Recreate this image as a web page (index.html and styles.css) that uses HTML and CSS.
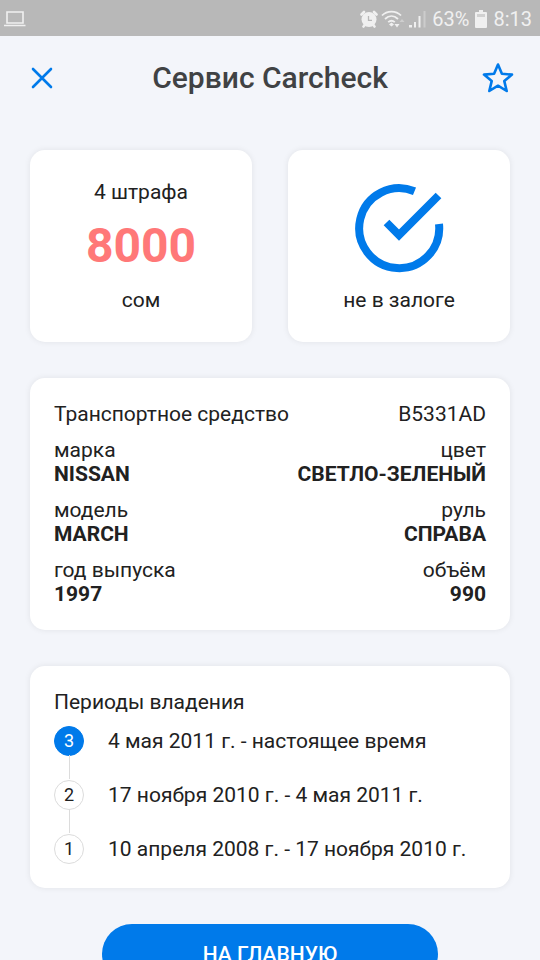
FILE: index.html
```html
<!DOCTYPE html>
<html lang="ru">
<head>
<meta charset="utf-8">
<meta name="viewport" content="width=device-width, initial-scale=1">
<title>Сервис Carcheck</title>
<link rel="stylesheet" href="styles.css">
</head>
<body>
<div class="status">
  <svg class="status-laptop" width="22" height="16" viewBox="0 0 22 16" aria-hidden="true"><path d="M3 1h16v11H3zM0 14.500h21.500" fill="none" stroke="currentColor" stroke-width="1.600"/></svg>
  <div class="status-right">
    <svg width="18" height="18" viewBox="0 0 18 18" aria-hidden="true"><path d="M1.500 4.500 4 2M16.500 4.500 14 2M3.500 16.500l2-2.500M14.500 16.500l-2-2.500" stroke="currentColor" stroke-width="2.600" stroke-linecap="round"/><circle cx="9" cy="9.500" r="7.500" fill="currentColor"/><path d="M8.500 6v4.300H12" fill="none" stroke="#b8b8b8" stroke-width="1.300"/></svg>
    <svg width="24" height="18" viewBox="0 0 24 18" aria-hidden="true"><g fill="none" stroke="currentColor" stroke-width="1.800"><path d="M1 5.500C6 .2 15 .2 20 5.500M4 9C8 5.200 13 5.200 17 9M7.200 12.200c2-1.800 4.600-1.800 6.600 0"/></g><path d="M8 14.500l2.500-2 2.500 2-2.500 2zM13.500 14h5L16 17.500z" fill="currentColor"/><path d="M21 9l2.500 3h-5z" fill="currentColor" opacity=".4"/></svg>
    <svg width="19" height="18" viewBox="0 0 19 18" aria-hidden="true"><g fill="currentColor"><path d="M1 15h3v2.500H1zM6 12h2v5.500H6zM10.500 6h2v11.500h-2z"/><path d="M15.500 1h2v16.500h-2z" opacity=".35"/></g></svg>
    <span class="status-charge">63%</span>
    <svg class="status-battery" width="12" height="18" viewBox="0 0 12 18" aria-hidden="true"><path d="M4 0h4v2h3q1 0 1 1v14q0 1-1 1H1q-1 0-1-1V3q0-1 1-1h3z" fill="currentColor"/><path d="M2 4h8v3H2z" fill="#b8b8b8" opacity=".55"/></svg>
    <time>8:13</time>
  </div>
</div>
<header class="header">
  <button class="icon-button" type="button" aria-label="Закрыть"><svg width="24" height="24" viewBox="0 0 24 24"><path d="M3 3l18 18M21 3 3 21" fill="none" stroke="currentColor" stroke-width="2.600" stroke-linecap="round"/></svg></button>
  <h1>Сервис Carcheck</h1>
  <button class="icon-button" type="button" aria-label="В избранное"><svg width="32" height="32" viewBox="0 0 32 32"><path d="M16 2.500l3.900 9.300 10.100.8-7.700 6.500 2.400 9.900L16 23.700 7.300 29l2.400-9.900L2 12.600l10.100-.8z" fill="none" stroke="currentColor" stroke-width="2.600" stroke-linejoin="round"/></svg></button>
</header>
<main class="content">
  <div class="tiles">
    <section class="card tile">
      <p>4 штрафа</p>
      <strong class="amount">8000</strong>
      <p>сом</p>
    </section>
    <section class="card tile">
      <svg class="check" width="90" height="90" viewBox="0 0 90 90" aria-hidden="true"><g fill="none" stroke="currentColor" stroke-width="8"><path d="M60.500 8.200A40 40 0 1 0 85 41"/><path d="M32.500 39.500 45 52 84.500 12.500"/></g></svg>
      <p>не в залоге</p>
    </section>
  </div>
  <section class="card">
    <div class="card-head"><h2>Транспортное средство</h2><span>B5331AD</span></div>
    <dl class="specs">
      <div><dt>марка</dt><dd>NISSAN</dd></div>
      <div><dt>цвет</dt><dd>СВЕТЛО-ЗЕЛЕНЫЙ</dd></div>
      <div><dt>модель</dt><dd>MARCH</dd></div>
      <div><dt>руль</dt><dd>СПРАВА</dd></div>
      <div><dt>год выпуска</dt><dd>1997</dd></div>
      <div><dt>объём</dt><dd>990</dd></div>
    </dl>
  </section>
  <section class="card">
    <div class="card-head"><h2>Периоды владения</h2></div>
    <ol class="periods" reversed>
      <li><span class="step step-current">3</span>4 мая 2011 г. - настоящее время</li>
      <li><span class="step">2</span>17 ноября 2010 г. - 4 мая 2011 г.</li>
      <li><span class="step">1</span>10 апреля 2008 г. - 17 ноября 2010 г.</li>
    </ol>
  </section>
  <button class="home" type="button">НА ГЛАВНУЮ</button>
</main>
</body>
</html>
```
FILE: styles.css
```css
* { box-sizing: border-box; }
body {
  margin: 0;
  height: 100vh;
  display: flex;
  flex-direction: column;
  overflow: hidden;
  background: #f3f5fa;
  color: #212121;
  font: 400 21px/24px Roboto, sans-serif;
}
h1, h2, p, dl, dd, ol { margin: 0; padding: 0; }
button { border: 0; font-family: inherit; cursor: pointer; }
svg { display: block; flex: none; }

.status {
  flex: none;
  display: flex;
  justify-content: space-between;
  align-items: center;
  height: 36px;
  padding: 2px 8px 0 4px;
  background: #b8b8b8;
  color: #f0f0f0;
  font-size: 20px;
}
.status-right { display: flex; align-items: center; gap: 3px; }
.status-charge { margin-left: 2px; }
.status-battery { margin: 0 3px; }

.header {
  flex: none;
  display: flex;
  align-items: center;
  justify-content: space-between;
  height: 84px;
  padding: 0 20px;
}
.header h1 { color: #404244; font-size: 30px; line-height: 36px; font-weight: 500; }
.icon-button {
  display: grid;
  place-items: center;
  width: 44px;
  height: 44px;
  padding: 0;
  background: none;
  color: #007aea;
}

.content {
  flex: 1;
  min-height: 0;
  overflow-y: auto;
  scrollbar-width: none;
  display: flex;
  flex-direction: column;
  gap: 36px;
  padding: 30px;
}
.content > * { flex: none; }
.card {
  padding: 24px;
  border-radius: 15px;
  background: #fff;
  box-shadow: 0 0 6px rgba(0, 0, 0, .08);
}
.tiles { display: grid; grid-template-columns: 1fr 1fr; gap: 36px; }
.tile {
  display: flex;
  flex-direction: column;
  align-items: center;
  justify-content: space-between;
  min-height: 192px;
  padding: 30px 24px;
}
.amount { color: #ff7878; font-size: 48px; line-height: 56px; font-weight: 700; }
.check { color: #007aea; margin-top: 3px; }

.card-head { display: flex; justify-content: space-between; margin-bottom: 12px; }
.card-head h2 { font-size: 21px; line-height: 24px; font-weight: 400; }
.specs { display: grid; grid-template-columns: auto auto; row-gap: 12px; }
.specs > :nth-child(even) { text-align: right; }
.specs dd { font-weight: 700; }

.periods { list-style: none; display: grid; gap: 24px; }
.periods li { display: flex; align-items: center; gap: 24px; }
.step {
  position: relative;
  flex: none;
  width: 30px;
  height: 30px;
  border: 1px solid #dcdcdc;
  border-radius: 50%;
  font-size: 18px;
  line-height: 28px;
  text-align: center;
}
.step-current { border-color: #007aea; background: #007aea; color: #fff; }
.periods li:not(:last-child) .step::after {
  content: "";
  position: absolute;
  top: 100%;
  left: 50%;
  height: 24px;
  border-left: 1px solid #dcdcdc;
}

.home {
  align-self: center;
  width: 70%;
  height: 60px;
  border-radius: 30px;
  background: #007aea;
  color: #fff;
  font-size: 21px;
  font-weight: 500;
}
```
